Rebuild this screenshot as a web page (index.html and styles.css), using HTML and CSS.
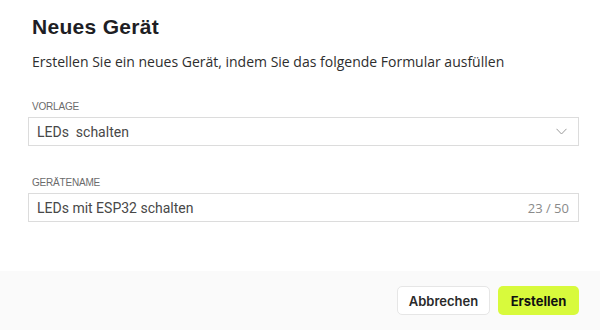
FILE: index.html
```html
<!DOCTYPE html>
<html lang="de">
<head>
<meta charset="utf-8">
<link rel="stylesheet" href="styles.css">
</head>
<body>
<div class="dialog">
  <div class="content">
    <h1 class="title">Neues Gerät</h1>
    <p class="subtitle">Erstellen Sie ein neues Gerät, indem Sie das folgende Formular ausfüllen</p>
    <div class="field">
      <div class="label">VORLAGE</div>
      <div class="box">
        <span class="value">LEDs&nbsp; schalten</span>
        <svg class="chev" width="11" height="7" viewBox="0 0 11 7"><path d="M0.5 0.8 L5.5 6 L10.5 0.8" fill="none" stroke="#9a9a9a" stroke-width="1"/></svg>
      </div>
    </div>
    <div class="field">
      <div class="label">GERÄTENAME</div>
      <div class="box">
        <span class="value">LEDs mit ESP32 schalten</span>
        <span class="counter">23 / 50</span>
      </div>
    </div>
  </div>
  <div class="footer">
    <button class="btn btn-cancel">Abbrechen</button>
    <button class="btn btn-primary">Erstellen</button>
  </div>
</div>
</body>
</html>
```
FILE: styles.css
```css
html, body {
  margin: 0;
  padding: 0;
  background: #ffffff;
}
.dialog {
  width: 600px;
  height: 330px;
  display: flex;
  flex-direction: column;
}
.content {
  flex: 1;
  padding: 15px 21px 0 28px;
}
.title {
  margin: 0 0 0 4px;
  font-family: "Liberation Sans", Arial, sans-serif;
  font-weight: 700;
  font-size: 21px;
  letter-spacing: 0.3px;
  line-height: 24px;
  color: #1e1e24;
}
.subtitle {
  margin: 14px 0 0 4px;
  font-family: "Open Sans", sans-serif;
  font-size: 14px;
  line-height: 18px;
  color: #2e2e2e;
}
.field {
  margin-top: 30px;
}
.field + .field {
  margin-top: 31px;
}
.label {
  margin-left: 4px;
  font-family: "Liberation Sans", Arial, sans-serif;
  font-size: 10px;
  line-height: 12px;
  color: #6b6b6b;
  letter-spacing: -0.2px;
}
.box {
  margin-top: 4px;
  height: 29px;
  border: 1px solid #dcdcdc;
  display: flex;
  align-items: center;
  padding: 0 9px 0 8px;
  box-sizing: border-box;
}
.value {
  flex: 1;
  font-family: Roboto, "Liberation Sans", sans-serif;
  font-size: 14px;
  color: #484848;
}
.chev {
  margin-right: 2px;
}
.counter {
  font-family: "Open Sans", sans-serif;
  font-size: 13px;
  color: #8a8a8a;
}
.footer {
  height: 59px;
  background: #fafafa;
  display: flex;
  justify-content: flex-end;
  align-items: center;
  gap: 8px;
  padding: 0 21px 0 0;
  box-sizing: border-box;
}
.btn {
  height: 29px;
  border-radius: 5px;
  font-family: Inter, sans-serif;
  font-weight: 600;
  font-size: 13px;
  color: #2a2a2a;
  padding: 0 10px;
  cursor: pointer;
}
.btn-cancel {
  width: 93px;
  background: #ffffff;
  border: 1px solid #e6e6e6;
}
.btn-primary {
  width: 81px;
  background: #d8fa3c;
  border: none;
  font-weight: 700;
  color: #111111;
}
```
